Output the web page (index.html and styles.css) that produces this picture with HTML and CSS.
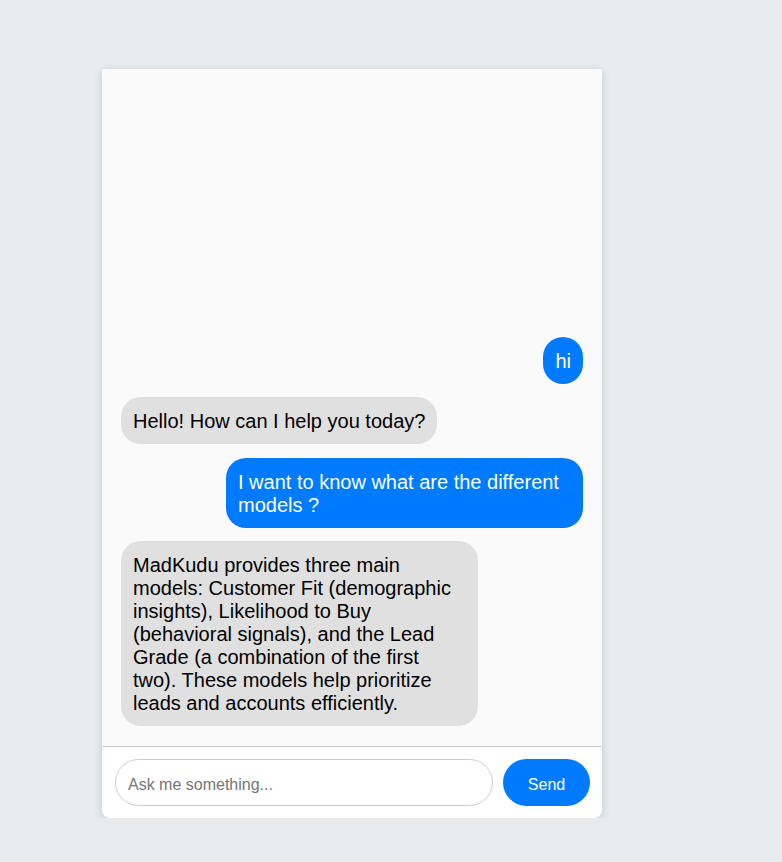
FILE: index.html
```html
<!DOCTYPE html>
<html lang="en">
<head>
  <meta charset="UTF-8" />
  <meta name="viewport" content="width=device-width, initial-scale=1.0"/>
  <title>MadKudu Chat</title>
  <link rel="stylesheet" href="styles.css">
</head>
<body>

  <div class="chat-box">
    <div class="messages">
      <div class="msg user">hi</div>
      <div class="msg bot">Hello! How can I help you today?</div>
      <div class="msg user">I want to know what are the different models ?</div>
      <div class="msg bot">MadKudu provides three main models: Customer Fit (demographic insights), Likelihood to Buy (behavioral signals), and the Lead Grade (a combination of the first two). These models help prioritize leads and accounts efficiently.</div>
    </div>

    <form class="input-row">
      <input type="text" placeholder="Ask me something...">
      <button type="submit" class="send-btn">Send</button>
    </form>
  </div>

</body>
</html>
```

FILE: styles.css
```css
body {
  font-family: "Liberation Sans", Arial, sans-serif;
  background: #e9ecef;
  margin: 0;
  padding: 69px 0 0 102px;
}

.chat-box {
  width: 500px;
  height: 749px;
  display: flex;
  flex-direction: column;
  background: #fff;
  border-radius: 0 0 8px 8px;
  box-shadow: 0 2px 10px rgba(0, 0, 0, 0.15);
}

.messages {
  flex: 1;
  background: #fafafa;
  display: flex;
  flex-direction: column;
  justify-content: flex-end;
  gap: 13.5px;
  padding: 20px 19px;
}

.msg {
  font-size: 20px;
  padding: 13px 12px 11px;
  border-radius: 20px;
  max-width: 333px;
}

.msg.user {
  align-self: flex-end;
  background: #007bff;
  color: #fff;
}

.msg.bot {
  align-self: flex-start;
  background: #e0e0e0;
  color: #000;
}

.input-row {
  display: flex;
  gap: 10px;
  margin: 0;
  padding: 12px 12px 12px 13px;
  border-top: 1px solid #ccc;
}

.input-row input {
  flex: 1;
  height: 47px;
  box-sizing: border-box;
  padding: 4px 12px 0;
  border: 1px solid #ccc;
  border-radius: 24px;
  font-family: inherit;
  font-size: 16px;
  outline: none;
}

.send-btn {
  width: 87px;
  height: 47px;
  padding: 4px 0 0;
  border: none;
  border-radius: 24px;
  background: #007bff;
  color: #fff;
  font-family: inherit;
  font-size: 16px;
  cursor: pointer;
}
```
